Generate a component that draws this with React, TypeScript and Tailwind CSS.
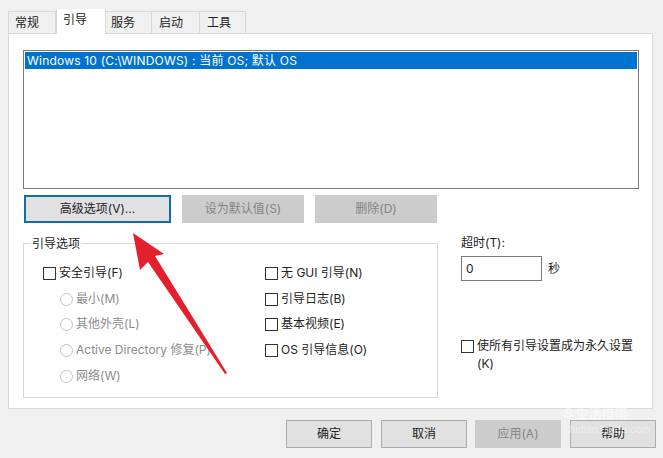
const font = { fontFamily: 'Inter, "Noto Sans CJK SC", sans-serif' }

function Tab({ label, active, className }: { label: string; active?: boolean; className: string }) {
  if (active) {
    return (
      <div className={`${className} h-[25px] -mb-px bg-white border-x border-[#d9d9d9] pt-[3px] relative z-10`}>
        {label}
      </div>
    )
  }
  return (
    <div className={`${className} h-[22px] bg-[#f0f0f0] border-t border-r border-[#d9d9d9] flex items-center`}>
      {label}
    </div>
  )
}

function Check({ label }: { label: string }) {
  return (
    <div className="h-[25.6px] flex items-center gap-[3px]">
      <span className="w-[13px] h-[13px] border border-[#333333] bg-white shrink-0"></span>
      <span className="-mt-px">{label}</span>
    </div>
  )
}

function Radio({ label }: { label: string }) {
  return (
    <div className="h-[25.6px] flex items-center gap-[3px] text-[#8c8c8c] whitespace-nowrap">
      <span className="w-[13px] h-[13px] rounded-full border border-[#c4c4c4] bg-white shrink-0"></span>
      <span className="-mt-px">{label}</span>
    </div>
  )
}

function Button({ label, className, disabled, focused }: { label: string; className: string; disabled?: boolean; focused?: boolean }) {
  let tone = "bg-[#e1e1e1] border border-[#adadad]"
  if (disabled) tone = "bg-[#cccccc] border border-[#cccccc] text-[#848484]"
  if (focused) tone = "bg-[#e1e1e1] border-2 border-[#0f6fa8]"
  return <div className={`${className} h-[28px] flex items-center justify-center ${tone}`}>{label}</div>
}

export default function App() {
  return (
    <div className="w-[663px] h-[458px] bg-[#f0f0f0] relative overflow-hidden text-[12px] leading-[16px] text-[#222222]" style={font}>
      <div className="pl-[8px] h-[33px] flex items-end">
        <Tab label="常规" className="w-[48px] pl-[6px] border-l" />
        <Tab label="引导" className="w-[50px] pl-[6px]" active />
        <Tab label="服务" className="w-[46px] pl-[5px]" />
        <Tab label="启动" className="w-[48px] pl-[7px]" />
        <Tab label="工具" className="w-[46px] pl-[7px]" />
      </div>

      <div className="mx-[8px] w-[645px] h-[376px] bg-white border border-[#d9d9d9] pl-[14px] pt-[16px]">
        <div className="w-[616px] h-[139px] border border-[#7a7a7a] p-px">
          <div className="h-[17px] bg-[#0072d0] text-white pl-[2px] flex items-center whitespace-nowrap tracking-[0.2px]">
            Windows 10 (C:\WINDOWS) : 当前 OS; 默认 OS
          </div>
        </div>

        <div className="flex gap-[11px] mt-[6px] ml-px">
          <Button label="高级选项(V)..." className="w-[147px]" focused />
          <Button label="设为默认值(S)" className="w-[122px]" disabled />
          <Button label="删除(D)" className="w-[122px]" disabled />
        </div>

        <div className="flex mt-[20px]">
          <div className="w-[415px] h-[155px] border border-[#d9d9d9] relative flex pl-[19px] pt-[17px]">
            <span className="absolute left-[7px] -top-[8px] bg-white px-px">引导选项</span>
            <div className="w-[222px]">
              <Check label="安全引导(F)" />
              <div className="pl-[17px]">
                <Radio label="最小(M)" />
                <Radio label="其他外壳(L)" />
                <Radio label="Active Directory 修复(P)" />
                <Radio label="网络(W)" />
              </div>
            </div>
            <div>
              <Check label="无 GUI 引导(N)" />
              <Check label="引导日志(B)" />
              <Check label="基本视频(E)" />
              <Check label="OS 引导信息(O)" />
            </div>
          </div>

          <div className="ml-[23px] w-[180px] flex flex-col -mt-[8px]">
            <div className="h-[21px]">超时(T):</div>
            <div className="flex items-center gap-[6px]">
              <div className="w-[81px] h-[25px] border border-[#7a7a7a] pl-[4px] flex items-center">0</div>
              <span>秒</span>
            </div>
            <div className="flex gap-[3px] mt-[58px]">
              <span className="w-[13px] h-[13px] border border-[#333333] shrink-0 mt-px"></span>
              <span className="leading-[18px] -mt-[2px]">
                使所有引导设置成为永久设置
                <br />
                (K)
              </span>
            </div>
          </div>
        </div>
      </div>

      <div className="flex mt-[11px] pl-[286px]">
        <Button label="确定" className="w-[86px]" />
        <Button label="取消" className="w-[86px] ml-[9px]" />
        <Button label="应用(A)" className="w-[86px] ml-[8px]" disabled />
        <Button label="帮助" className="w-[86px] ml-[9px]" />
      </div>

      {/* red annotation arrow */}
      <svg className="absolute left-0 top-0 pointer-events-none" width="663" height="458">
        <polygon points="133,233 164,254 155,256 227,373 225,374 148,262 140,270" fill="#e3202b" />
      </svg>

      {/* watermark */}
      <div className="absolute left-[564px] top-[405px] text-white/50 pointer-events-none whitespace-nowrap">
        <div className="text-[13px] leading-[16px] font-bold">S 生活指南</div>
        <div className="text-[10px] leading-[12px] mt-[2px]">shidian.baidu.com</div>
      </div>
    </div>
  )
}
